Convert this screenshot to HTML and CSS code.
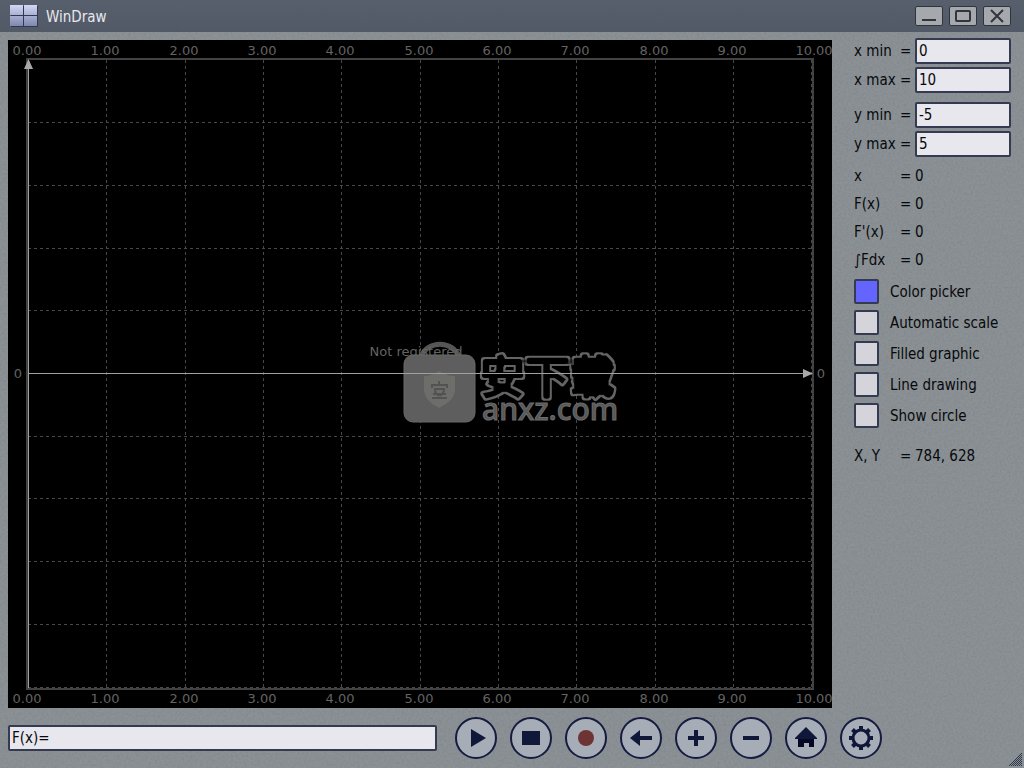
FILE: index.html
```html
<!DOCTYPE html>
<html lang="en">
<head>
<meta charset="utf-8">
<title>WinDraw</title>
<link rel="stylesheet" href="styles.css">
</head>
<body class="app">
<svg class="grain" aria-hidden="true">
  <filter id="noise" x="0" y="0" width="100%" height="100%">
    <feTurbulence type="fractalNoise" baseFrequency="0.45" numOctaves="3" seed="4"/>
    <feColorMatrix type="matrix" values="0 0 0 0 0.1  0 0 0 0 0.12  0 0 0 0 0.13  0.8 0.8 0 0 -0.65"/>
  </filter>
  <rect width="100%" height="100%" filter="url(#noise)"/>
</svg>
<header class="titlebar">
  <svg class="logo" width="28" height="22" viewBox="0 0 28 22" aria-hidden="true">
    <defs><linearGradient id="pane" x1="0" y1="0" x2="0" y2="22" gradientUnits="userSpaceOnUse"><stop offset="0" stop-color="#d2d8f4"/><stop offset="1" stop-color="#7a84ab"/></linearGradient></defs>
    <path fill="#303852" d="M1 1h27v21H1z"/>
    <path fill="url(#pane)" d="M0 0h13v10H0zM14 0h13v10H14zM0 11h13v10H0zM14 11h13v10H14z"/>
  </svg>
  <h1 class="title">WinDraw</h1>
  <button class="win-btn" type="button" aria-label="Minimize"><svg width="24" height="18" viewBox="0 0 24 18"><path d="M5 13h14" /></svg></button>
  <button class="win-btn" type="button" aria-label="Maximize"><svg width="24" height="18" viewBox="0 0 24 18"><rect x="5" y="4" width="14" height="10" rx="1"/></svg></button>
  <button class="win-btn" type="button" aria-label="Close"><svg width="24" height="18" viewBox="0 0 24 18"><path d="M6 3l12 12M18 3L6 15"/></svg></button>
</header>
<main class="workspace">
  <svg class="plot" viewBox="0 0 824 668" role="img" aria-label="Function plot">
    <defs>
      <filter id="outline" x="-5%" y="-10%" width="110%" height="120%" color-interpolation-filters="sRGB">
        <feMorphology in="SourceAlpha" operator="erode" radius="1" result="thin"/>
        <feMorphology in="SourceAlpha" operator="erode" radius="2" result="core"/>
        <feFlood flood-color="#646464"/>
        <feComposite in2="SourceAlpha" operator="in"/>
        <feComposite in2="core" operator="out" result="edge"/>
        <feMerge><feMergeNode in="core"/><feMergeNode in="edge"/></feMerge>
      </filter>
    </defs>
    <path class="grid" d="M98.500 20V648M177.500 20V648M255.500 20V648M333.500 20V648M412.500 20V648M490.500 20V648M568.500 20V648M647.500 20V648M725.500 20V648M803.500 20V648"/>
    <path class="grid" d="M20 82.500H804M20 145.500H804M20 208.500H804M20 270.500H804M20 396.500H804M20 458.500H804M20 521.500H804M20 584.500H804M20 647.500H804"/>
    <path class="frame" d="M19 19H805V649H19z"/>
    <g class="tick">
      <text x="19" y="15">0.00</text><text x="97" y="15">1.00</text><text x="176" y="15">2.00</text><text x="254" y="15">3.00</text><text x="332" y="15">4.00</text><text x="411" y="15">5.00</text><text x="489" y="15">6.00</text><text x="567" y="15">7.00</text><text x="646" y="15">8.00</text><text x="724" y="15">9.00</text><text x="806" y="15">10.00</text>
      <text x="19" y="663">0.00</text><text x="97" y="663">1.00</text><text x="176" y="663">2.00</text><text x="254" y="663">3.00</text><text x="332" y="663">4.00</text><text x="411" y="663">5.00</text><text x="489" y="663">6.00</text><text x="567" y="663">7.00</text><text x="646" y="663">8.00</text><text x="724" y="663">9.00</text><text x="806" y="663">10.00</text>
      <text x="10" y="338">0</text><text x="813" y="338">0</text>
      <text x="408" y="316">Not registered</text>
    </g>
    <path d="M413 317C419 300 445 300 451 317" fill="none" stroke="#656565" stroke-opacity=".85" stroke-width="5"/>
    <rect x="396" y="315" width="71" height="67" rx="9" fill="#5e5e5e" stroke="#686868"/>
    <g transform="translate(-8 1)">
      <path d="M424 335q8 0 15-5q8 5 16 5v15q-1 10-16 17q-14-7-15-17z" fill="#6d6d6a"/>
      <path d="M439 340v3M432 347v-3h15v3M434 348h11M435 349c1 7 8 7 9 0M433 353h13M432 357h15" fill="none" stroke="#535353" stroke-width="2"/>
    </g>
    <text class="mark-cjk" x="472" y="354" filter="url(#outline)">安下载</text>
    <text class="mark-latin" x="474" y="380">anxz.com</text>
    <path class="axis" d="M20.500 26V648M20 333.500H798"/>
    <path class="axis-head" d="M20.500 19L25 29H16zM805 333.500L795 329V338z"/>
  </svg>
  <aside class="panel">
    <form class="ranges">
      <div class="field"><label for="xmin">x min</label><span>=</span><input id="xmin" class="box" value="0" autofocus></div>
      <div class="field"><label for="xmax">x max</label><span>=</span><input id="xmax" class="box" value="10"></div>
      <div class="field field-next"><label for="ymin">y min</label><span>=</span><input id="ymin" class="box" value="-5"></div>
      <div class="field"><label for="ymax">y max</label><span>=</span><input id="ymax" class="box" value="5"></div>
    </form>
    <div class="readouts">
      <div class="readout"><span>x</span><span>=</span><output>0</output></div>
      <div class="readout"><span>F(x)</span><span>=</span><output>0</output></div>
      <div class="readout"><span>F'(x)</span><span>=</span><output>0</output></div>
      <div class="readout"><span>∫Fdx</span><span>=</span><output>0</output></div>
    </div>
    <div class="options">
      <label class="option"><input class="swatch" type="color" value="#6464ff">Color picker</label>
      <label class="option"><input class="check" type="checkbox">Automatic scale</label>
      <label class="option"><input class="check" type="checkbox">Filled graphic</label>
      <label class="option"><input class="check" type="checkbox">Line drawing</label>
      <label class="option"><input class="check" type="checkbox">Show circle</label>
    </div>
    <div class="readout"><span>X, Y</span><span>=</span><output>784, 628</output></div>
  </aside>
</main>
<footer class="toolbar">
  <input class="box formula" aria-label="Function" value="F(x)=">
  <div class="tools">
    <button class="tool" type="button" aria-label="Draw"><svg viewBox="0 0 42 42"><path d="M16 12l15 9-15 9z"/></svg></button>
    <button class="tool" type="button" aria-label="Stop"><svg viewBox="0 0 42 42"><path d="M12 14h18v14H12z"/></svg></button>
    <button class="tool" type="button" aria-label="Record"><svg viewBox="0 0 42 42"><circle cx="21" cy="21" r="8" fill="#6e3434"/></svg></button>
    <button class="tool" type="button" aria-label="Back"><svg viewBox="0 0 42 42"><path d="M10 21l10-8v6h12v4H20v6z"/></svg></button>
    <button class="tool" type="button" aria-label="Zoom in"><svg viewBox="0 0 42 42"><path d="M19 13h4v6h6v4h-6v6h-4v-6h-6v-4h6z"/></svg></button>
    <button class="tool" type="button" aria-label="Zoom out"><svg viewBox="0 0 42 42"><path d="M13 19h16v4H13z"/></svg></button>
    <button class="tool" type="button" aria-label="Home"><svg viewBox="0 0 42 42"><path d="M21 10l11 11v1H10v-1z"/><path fill="#050724" d="M13 22h16v8h-5v-4h-5v4h-6z"/></svg></button>
    <button class="tool" type="button" aria-label="Settings"><svg viewBox="0 0 42 42"><g fill="none" stroke="#10183a"><circle cx="21" cy="21" r="8" stroke-width="3"/><path stroke-width="4" d="M21 9v4M21 29v4M9 21h4M29 21h4M12.500 12.500l3 3M26.500 26.500l3 3M29.500 12.500l-3 3M15.500 26.500l-3 3"/></g></svg></button>
  </div>
  <svg class="grip" width="14" height="14" viewBox="0 0 14 14" aria-hidden="true">
    <defs><pattern id="dots" width="2" height="2" patternUnits="userSpaceOnUse"><path fill="#30364e" d="M0 0h1v1H0zM1 1h1v1H1z"/></pattern></defs>
    <path fill="url(#dots)" d="M14 0v14H0z"/>
  </svg>
</footer>
</body>
</html>
```
FILE: styles.css
```css
* { box-sizing: border-box; }

.app {
  margin: 0;
  height: 100vh;
  display: flex;
  flex-direction: column;
  background: #8b9194;
  color: #08090c;
  font: 15px/20px "DejaVu Sans Condensed", "Noto Sans", sans-serif;
  isolation: isolate;
}

.grain {
  position: absolute;
  inset: 0;
  width: 100%;
  height: 100%;
  opacity: 0.3;
  z-index: -1;
}

.titlebar {
  height: 32px;
  flex: none;
  display: flex;
  align-items: center;
  gap: 8px;
  padding: 0 13px 0 10px;
  background: linear-gradient(rgba(82, 90, 104, 0.9), rgba(76, 84, 98, 0.9));
}

.title {
  flex: 1;
  margin: 0;
  padding-top: 2px;
  font-size: 15px;
  font-weight: 400;
  color: #e6e8ee;
}

.win-btn {
  width: 28px;
  height: 20px;
  padding: 0;
  display: grid;
  place-items: center;
  background: #a5a9ad;
  border: 1px solid #30343c;
  border-radius: 2px;
}

.win-btn + .win-btn { margin-left: -2px; }
.win-btn svg { fill: none; stroke: #32353a; stroke-width: 2; }

.workspace {
  flex: 1;
  min-height: 0;
  display: flex;
  gap: 22px;
  padding: 8px 13px 0 8px;
}

.plot {
  flex: 1;
  min-width: 0;
  height: 100%;
  background: #000;
}

.grid { stroke: #484848; stroke-dasharray: 3 3; }
.frame { fill: none; stroke: #424242; stroke-width: 2; }
.axis { fill: none; stroke: #a0a0a0; }
.axis-head { fill: #a8a8a8; }

.tick {
  font: 13px "DejaVu Sans", sans-serif;
  fill: #636363;
  text-anchor: middle;
}

.mark-cjk {
  font: 500 45px "Noto Sans CJK SC", sans-serif;
  stroke: #000;
  stroke-width: 6;
  stroke-linejoin: round;
}

.mark-latin {
  font: 500 30px "Noto Sans", sans-serif;
  fill: #585858;
  stroke: #6c6c6c;
}

.panel { flex: 0 0 157px; }

.ranges {
  display: flex;
  flex-direction: column;
  gap: 3px;
  margin-top: -2px;
}

.field, .readout {
  display: grid;
  grid-template-columns: 46px 15px 1fr;
  align-items: center;
}

.field-next { margin-top: 6px; }
.readouts { margin: 5px 0 5px; }
.readout { height: 28px; white-space: nowrap; }

.box {
  width: 100%;
  min-width: 0;
  height: 26px;
  padding: 0 2px;
  font: inherit;
  color: #08090c;
  background: #e7e7ed;
  border: 2px solid #343a50;
  border-radius: 2px;
  outline: none;
}

.options {
  display: flex;
  flex-direction: column;
  gap: 6px;
  margin-bottom: 14px;
}

.option {
  display: flex;
  align-items: center;
  gap: 11px;
  white-space: nowrap;
}

.check, .swatch {
  appearance: none;
  flex: none;
  width: 25px;
  height: 25px;
  margin: 0;
  padding: 0;
  background: #d4d4da;
  border: 2px solid #343a50;
  border-radius: 2px;
}

.swatch { background: #6464ff; }
.swatch::-webkit-color-swatch-wrapper { padding: 0; }
.swatch::-webkit-color-swatch { border: 0; }

.toolbar {
  position: relative;
  flex: none;
  height: 60px;
  display: flex;
  align-items: center;
  gap: 18px;
  padding: 0 142px 0 8px;
}

.formula { flex: 1; }
.tools { display: flex; gap: 13px; }

.tool {
  width: 42px;
  height: 42px;
  padding: 0;
  display: grid;
  background: #a7adb7;
  border: 2px solid #151c40;
  border-radius: 50%;
}

.tool svg {
  width: 42px;
  height: 42px;
  margin: -2px;
  fill: #10183a;
}

.grip {
  position: absolute;
  right: 2px;
  bottom: 2px;
}
```
